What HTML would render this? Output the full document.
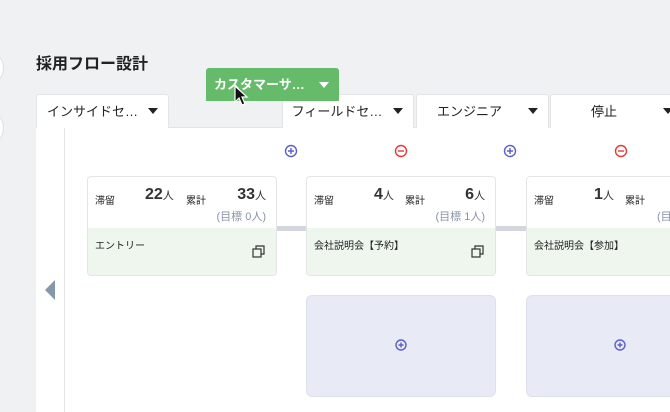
<!DOCTYPE html>
<html style="width:670px;height:412px;overflow:hidden"><head><meta charset="utf-8"><style>
*{box-sizing:border-box;margin:0;padding:0}
body{width:670px;height:412px;overflow:hidden;background:#f0f1f3;position:relative;font-family:"Liberation Sans","Noto Sans CJK JP",sans-serif;color:#222}
.abs{position:absolute}
.circ{position:absolute;width:36px;height:36px;border-radius:50%;background:#fff;border:1px solid #dcdfe4}
h1{position:absolute;left:36px;top:50px;font-size:16px;font-weight:700;color:#222}
.tab{position:absolute;top:94px;height:34px;background:#fff;border:1px solid #e2e4e8;border-bottom:none;border-radius:3px 3px 0 0;font-size:13px;line-height:33px;color:#222}
.tab .t{position:absolute;left:0;right:26px;text-align:center}
.tab .a{position:absolute;right:10px;top:13px;width:0;height:0;border-left:5px solid transparent;border-right:5px solid transparent;border-top:6px solid #222}
.panel{position:absolute;left:36px;top:127px;width:634px;height:285px;background:#fff;border-top:1px solid #e2e4e8}
.card{position:absolute;top:176px;width:190px;height:100px;background:#fff;border:1px solid #e3e5e8;border-radius:4px;overflow:hidden}
.card .bot{position:absolute;left:0;right:0;top:51px;bottom:0;background:#eef6ee}
.card .s{position:absolute;font-size:10px;top:15px}
.card .n{position:absolute;font-size:16px;top:9px;font-weight:700;color:#333}
.card .n small{font-size:11px;font-weight:400}
.card .g{position:absolute;font-size:11px;color:#8a93a8;top:31px;right:10px}
.card .name{position:absolute;left:7px;top:9px;font-size:10px}
.conn{position:absolute;top:226px;height:5px;width:32px;background:#d3d6dd}
.add{position:absolute;top:295px;width:190px;height:102px;background:#e8ebf6;border:1px solid #dde1ef;border-radius:6px}
</style></head><body>
<div class="circ" style="left:-32px;top:50px"></div>
<div class="circ" style="left:-32px;top:110px"></div>
<h1>採用フロー設計</h1>
<div class="panel"></div>
<div class="abs" style="left:64px;top:128px;width:1px;height:284px;background:#e2e4e8"></div>
<svg class="abs" style="left:44px;top:280px" width="12" height="20"><path d="M11 0 L1 10 L11 20Z" fill="#8797ab"/></svg>
<div class="tab" style="left:36px;width:133px"><span class="t" style="left:0;right:20px">インサイドセ…</span><span class="a"></span></div>
<div class="tab" style="left:282px;width:132px"><span class="t" style="right:22px">フィールドセ…</span><span class="a"></span></div>
<div class="tab" style="left:416px;width:133px"><span class="t">エンジニア</span><span class="a"></span></div>
<div class="tab" style="left:550px;width:130px"><span class="t" style="right:22px">停止</span><span class="a" style="right:6px"></span></div>
<div class="abs" style="left:206px;top:68px;width:133px;height:33px;background:#66bb6a;border-radius:3px 3px 0 0;color:#fff;font-size:13px;line-height:34px;font-weight:700"><span style="position:absolute;left:8px">カスタマーサ…</span><span style="position:absolute;right:10px;top:14px;border-left:5px solid transparent;border-right:5px solid transparent;border-top:6px solid #fff"></span></div>
<svg class="abs" style="left:233px;top:85px" width="16" height="24"><path d="M2 1 L2 17 L6 13 L9 20 L12 19 L9 12 L14 12Z" fill="#111" stroke="#fff" stroke-width="1.2"/></svg>
<svg class="abs" style="left:0;top:0" width="670" height="412">
<g fill="none" stroke-width="1.4">
<g stroke="#5b5fc7"><circle cx="291" cy="151" r="5.5"/><path d="M288 151h6M291 148v6"/><circle cx="510" cy="151" r="5.5"/><path d="M507 151h6M510 148v6"/></g>
<g stroke="#e53935"><circle cx="401" cy="151" r="5.5"/><path d="M398 151h6"/><circle cx="621" cy="151" r="5.5"/><path d="M618 151h6"/></g>
</g></svg>
<div class="conn" style="left:276px"></div>
<div class="conn" style="left:495px"></div>
<div class="card" style="left:87px">
<span class="s" style="left:7px">滞留</span><span class="n" style="left:57px">22<small>人</small></span><span class="s" style="left:98px">累計</span><span class="n" style="right:10px">33<small>人</small></span><span class="g">(目標 0人)</span>
<div class="bot"><span class="name">エントリー</span><svg class="abs" style="right:10px;top:17px" width="14" height="14"><g fill="none" stroke="#333" stroke-width="1.2"><rect x="1" y="4" width="8" height="8"/><path d="M4 4V1h8v8H9"/></g></svg></div></div>
<div class="card" style="left:306px">
<span class="s" style="left:7px">滞留</span><span class="n" style="left:67px">4<small>人</small></span><span class="s" style="left:98px">累計</span><span class="n" style="right:10px">6<small>人</small></span><span class="g">(目標 1人)</span>
<div class="bot"><span class="name">会社説明会【予約】</span><svg class="abs" style="right:10px;top:17px" width="14" height="14"><g fill="none" stroke="#333" stroke-width="1.2"><rect x="1" y="4" width="8" height="8"/><path d="M4 4V1h8v8H9"/></g></svg></div></div>
<div class="card" style="left:526px">
<span class="s" style="left:7px">滞留</span><span class="n" style="left:67px">1<small>人</small></span><span class="s" style="left:98px">累計</span><span class="g" style="right:auto;left:130px">(目標</span>
<div class="bot"><span class="name">会社説明会【参加】</span></div></div>
<div class="add" style="left:306px"></div>
<div class="add" style="left:526px"></div>
<svg class="abs" style="left:0;top:0" width="670" height="412"><g fill="none" stroke="#5b5fc7" stroke-width="1.4"><circle cx="401" cy="345" r="5"/><path d="M398.5 345h5M401 342.5v5"/><circle cx="620" cy="345" r="5"/><path d="M617.5 345h5M620 342.5v5"/></g></svg>
</body></html>
